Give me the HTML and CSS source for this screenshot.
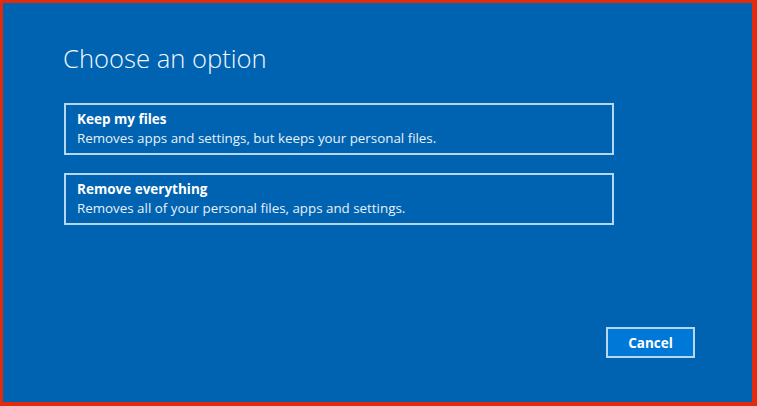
FILE: index.html
```html
<!DOCTYPE html>
<html>
<head>
<meta charset="utf-8">
<link rel="stylesheet" href="styles.css">
</head>
<body>
<div class="frame">
  <h1 class="title">Choose an option</h1>
  <div class="options">
    <div class="option">
      <div class="opt-title">Keep my files</div>
      <div class="opt-desc">Removes apps and settings, but keeps your personal files.</div>
    </div>
    <div class="option">
      <div class="opt-title">Remove everything</div>
      <div class="opt-desc">Removes all of your personal files, apps and settings.</div>
    </div>
  </div>
  <div class="actions">
    <button class="cancel">Cancel</button>
  </div>
</div>
</body>
</html>
```

FILE: styles.css
```css
html, body {
  margin: 0;
  padding: 0;
  width: 757px;
  height: 406px;
  overflow: hidden;
}
.frame {
  box-sizing: border-box;
  width: 757px;
  height: 406px;
  background: #0063b1;
  border-style: solid;
  border-color: #e02c0c;
  border-width: 3px 5px 4px 3px;
  padding: 0 0 0 61px;
  display: flex;
  flex-direction: column;
  font-family: "Open Sans", "Noto Sans", sans-serif;
  color: #ffffff;
}
.title {
  margin: 39px 0 0 -1px;
  font-size: 25.6px;
  font-weight: 300;
  line-height: 34px;
  letter-spacing: 0;
  color: #f4f8fc;
}
.options {
  margin-top: 27px;
  display: flex;
  flex-direction: column;
  gap: 18px;
  width: 550px;
}
.option {
  box-sizing: border-box;
  height: 52px;
  border: 2px solid #b7d6f0;
  padding: 5px 12px 0 11px;
}
.opt-title {
  font-size: 13.5px;
  font-weight: 700;
  line-height: 18px;
  color: #ffffff;
}
.opt-desc {
  font-size: 13.35px;
  line-height: 20px;
  color: #e8f1fa;
}
.actions {
  margin-top: auto;
  margin-bottom: 44px;
  display: flex;
  justify-content: flex-end;
  padding-right: 57px;
}
.cancel {
  box-sizing: border-box;
  width: 89px;
  height: 31px;
  background: #0078d7;
  border: 2px solid #b7d6f0;
  color: #ffffff;
  font-family: "Open Sans", "Noto Sans", sans-serif;
  font-size: 13.5px;
  font-weight: 700;
  padding: 0;
}
```
